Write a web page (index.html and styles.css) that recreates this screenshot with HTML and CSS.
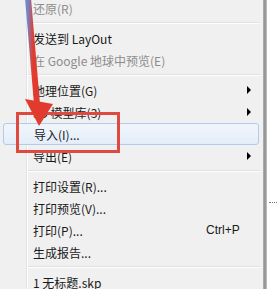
FILE: index.html
```html
<!DOCTYPE html>
<html lang="zh">
<head>
<meta charset="utf-8">
<link rel="stylesheet" href="styles.css">
</head>
<body>
<div class="screen">
  <div class="menu">
    <div class="item disabled">还原(R)</div>
    <div class="sep"></div>
    <div class="item">发送到 LayOut</div>
    <div class="item disabled">在 Google 地球中预览(E)</div>
    <div class="sep"></div>
    <div class="item sub">地理位置(G)</div>
    <div class="item sub">3D 模型库(3)</div>
    <div class="item hot">导入(I)...</div>
    <div class="item sub">导出(E)</div>
    <div class="sep"></div>
    <div class="item">打印设置(R)...</div>
    <div class="item">打印预览(V)...</div>
    <div class="item"><span class="label">打印(P)...</span><span class="key">Ctrl+P</span></div>
    <div class="item">生成报告...</div>
    <div class="sep"></div>
    <div class="item">1 无标题.skp</div>
  </div>
  <div class="edge"></div>
  <div class="outside"><span class="dots"></span></div>

  <div class="redbox"></div>
  <svg class="pointer" width="70" height="140" viewBox="0 0 70 140">
    <defs>
      <linearGradient id="lg" x1="0" y1="0" x2="1" y2="0.35">
        <stop offset="0" stop-color="#6f86cc"/>
        <stop offset="0.45" stop-color="#c4505a"/>
        <stop offset="0.7" stop-color="#e23b2e"/>
        <stop offset="1" stop-color="#e23b2e"/>
      </linearGradient>
    </defs>
    <line x1="28" y1="-2" x2="37" y2="104" stroke="url(#lg)" stroke-width="6"/>
    <polygon points="25,99 53,104 39,126" fill="#e23b2e"/>
  </svg>
</div>
</body>
</html>
```
FILE: styles.css
```css
html, body {
  margin: 0;
  padding: 0;
  background: #ffffff;
}
.screen {
  position: relative;
  width: 277px;
  height: 289px;
  overflow: hidden;
  display: flex;
  font-family: "Noto Sans CJK SC", "Noto Sans", sans-serif;
  font-size: 12px;
  color: #1a1a1a;
}
.menu {
  width: 262px;
  flex: none;
  margin-top: -3px;
  padding-right: 1px;
  background-color: #f0f0f0;
  background-image: linear-gradient(to right, transparent 26px, #e2e3e3 26px, #e2e3e3 27px, #ffffff 27px, #ffffff 28px, transparent 28px);
}
.item {
  height: 22px;
  display: flex;
  align-items: center;
  padding-left: 33px;
  padding-right: 12px;
  box-sizing: border-box;
  position: relative;
  white-space: nowrap;
}
.item.disabled {
  color: #8d8d8d;
}
.item.sub::after {
  content: "";
  position: absolute;
  left: 247px;
  top: 7px;
  border-left: 4px solid #000;
  border-top: 4px solid transparent;
  border-bottom: 4px solid transparent;
}
.item.hot {
  margin-left: 3px;
  margin-right: 3px;
  padding-left: 30px;
  border: 1px solid #b0cbeb;
  border-radius: 3px;
  background: linear-gradient(#f1f6fc, #e3edf9);
}
.label {
  flex: 1;
}
.key {
  position: absolute;
  left: 206px;
  font-family: "Liberation Sans", sans-serif;
  font-size: 12px;
}
.sep {
  height: 8px;
  margin-left: 28px;
  margin-right: 3px;
  background: linear-gradient(to bottom, transparent 3px, #e0e0e0 3px, #e0e0e0 4px, #ffffff 4px, #ffffff 5px, transparent 5px);
}
.edge {
  width: 4px;
  flex: none;
  background: linear-gradient(to right, #b5b5b5, #959595 40%, #9c9c9c 75%, #d6d6d6);
}
.outside {
  flex: 1;
  position: relative;
  background: #ffffff;
}
.dots {
  position: absolute;
  left: 2px;
  top: 202px;
  width: 10px;
  border-top: 1px dotted #7a7a7a;
}
.redbox {
  position: absolute;
  left: 16px;
  top: 112px;
  width: 104px;
  height: 41px;
  box-sizing: border-box;
  border: 3px solid #df4a40;
}
.pointer {
  position: absolute;
  left: 0;
  top: 0;
}
```
